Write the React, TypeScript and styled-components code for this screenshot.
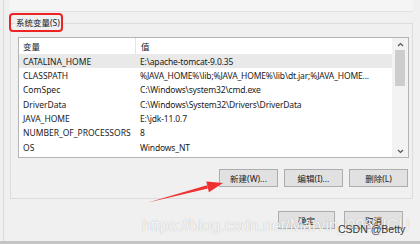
import React from 'react';
import styled, { createGlobalStyle } from 'styled-components';

const GlobalStyle = createGlobalStyle`
  html, body {
    margin: 0;
    padding: 0;
    background: #f0f0f0;
  }
  body {
    font-family: "Noto Sans", "Noto Sans CJK SC", sans-serif;
    color: #1a1a1a;
  }
`;

interface EnvVar {
  name: string;
  value: string;
}

const VARS: EnvVar[] = [
  { name: 'CATALINA_HOME', value: 'E:\\apache-tomcat-9.0.35' },
  { name: 'CLASSPATH', value: '%JAVA_HOME%\\lib;%JAVA_HOME%\\lib\\dt.jar;%JAVA_HOME...' },
  { name: 'ComSpec', value: 'C:\\Windows\\system32\\cmd.exe' },
  { name: 'DriverData', value: 'C:\\Windows\\System32\\Drivers\\DriverData' },
  { name: 'JAVA_HOME', value: 'E:\\jdk-11.0.7' },
  { name: 'NUMBER_OF_PROCESSORS', value: '8' },
  { name: 'OS', value: 'Windows_NT' },
];

const Chevron = ({ down }: { down?: boolean }) => (
  <svg width="7" height="5" viewBox="0 0 7 5">
    <polyline
      points={down ? '1,1 3.5,3.5 6,1' : '1,4 3.5,1.5 6,4'}
      fill="none"
      stroke="#555"
      strokeWidth="1.2"
    />
  </svg>
);

const Arrow = () => (
  <ArrowSvg width="420" height="244" viewBox="0 0 420 244">
    <polygon points="148,202.5 207.9,188.6 207.1,185.2" fill="#f03030" />
    <polygon points="223,183 206.3,181.6 208.9,192.2" fill="#f03030" />
  </ArrowSvg>
);

const App = () => {
  return (
    <Window>
      <GlobalStyle />
      <Body>
        <TopStrip />
        <GroupBox>
          <Legend>系统变量(S)</Legend>
          <ListBox>
            <Table>
              <HeaderRow>
                <NameCell>变量</NameCell>
                <HeaderDivider />
                <ValueCell>值</ValueCell>
              </HeaderRow>
              {VARS.map((v, i) => (
                <Row key={v.name} selected={i === 0}>
                  <NameCell>{v.name}</NameCell>
                  <ValueCell>{v.value}</ValueCell>
                </Row>
              ))}
            </Table>
            <ScrollBar>
              <ScrollArrow>
                <Chevron />
              </ScrollArrow>
              <Track>
                <Thumb />
              </Track>
              <ScrollArrow>
                <Chevron down />
              </ScrollArrow>
            </ScrollBar>
          </ListBox>
          <ButtonRow>
            <Button>新建(W)...</Button>
            <Button>编辑(I)...</Button>
            <Button>删除(L)</Button>
          </ButtonRow>
        </GroupBox>
        <DialogButtons>
          <Button narrow>确定</Button>
          <Button>取消</Button>
        </DialogButtons>
      </Body>
      <BottomBar />
      <Highlight />
      <Arrow />
      <Watermark>https://blog.csdn.net/Marvin_996_ICU</Watermark>
      <Credit>CSDN @Betty</Credit>
    </Window>
  );
};

export default App;

const Window = styled.div`
  position: relative;
  width: 420px;
  height: 244px;
  overflow: hidden;
  display: flex;
  flex-direction: column;
  background: #f0f0f0;
  font-size: 8.5px;
`;

const Body = styled.div`
  flex: 1;
  margin-left: 3px;
  padding-left: 6px;
  border-left: 1px solid #dadada;
  display: flex;
  flex-direction: column;
`;

const TopStrip = styled.div`
  height: 11px;
  margin-right: 7px;
  background: #f5f5f5;
  border-bottom: 1px solid #e0e0e0;
`;

const GroupBox = styled.fieldset`
  margin: 4px 7px 0 0;
  padding: 7px 3px 11px 7px;
  border: 1px solid #dcdcdc;
  min-width: 0;
  display: flex;
  flex-direction: column;
`;

const Legend = styled.legend`
  margin-left: -3px;
  padding: 0 1px;
  line-height: 14px;
  font-size: 8.5px;
  color: #1a1a1a;
`;

const ListBox = styled.div`
  height: 121px;
  box-sizing: border-box;
  border: 1px solid #b4b4b4;
  background: #fff;
  display: flex;
`;

const Table = styled.div`
  flex: 1;
  display: flex;
  flex-direction: column;
`;

const HeaderRow = styled.div`
  height: 16px;
  display: flex;
  align-items: center;
  background: #fff;
`;

const HeaderDivider = styled.div`
  width: 1px;
  align-self: stretch;
  background: #e5e5e5;
`;

const Row = styled.div<{ selected?: boolean }>`
  height: 14.33px;
  display: flex;
  align-items: center;
  background: ${(p) => (p.selected ? '#e9e9e9' : '#fff')};
`;

const NameCell = styled.div`
  width: 116px;
  padding-left: 4px;
  box-sizing: border-box;
  white-space: nowrap;
`;

const ValueCell = styled.div`
  flex: 1;
  padding-left: 5px;
  white-space: nowrap;
  overflow: hidden;
  letter-spacing: -0.15px;
`;

const ScrollBar = styled.div`
  width: 16px;
  display: flex;
  flex-direction: column;
  background: #f3f3f3;
`;

const ScrollArrow = styled.div`
  height: 12px;
  display: flex;
  align-items: center;
  justify-content: center;
`;

const Track = styled.div`
  flex: 1;
  padding: 0 3px;
`;

const Thumb = styled.div`
  height: 36px;
  background: #cdcdcd;
`;

const ButtonRow = styled.div`
  margin-top: 11px;
  padding-right: 1px;
  display: flex;
  justify-content: flex-end;
  gap: 6px;
`;

const Button = styled.div<{ narrow?: boolean }>`
  width: ${(p) => (p.narrow ? 57 : 59)}px;
  height: 18px;
  box-sizing: border-box;
  border: 1px solid #adadad;
  background: #e1e1e1;
  display: flex;
  align-items: center;
  justify-content: center;
  font-size: 8.5px;
  color: #1a1a1a;
`;

const DialogButtons = styled.div`
  margin-top: 12px;
  padding-right: 17px;
  display: flex;
  justify-content: flex-end;
  gap: 9px;
`;

const BottomBar = styled.div`
  height: 3px;
  background: #c4c4c4;
`;

const Highlight = styled.div`
  position: absolute;
  left: 9px;
  top: 13px;
  width: 54px;
  height: 19px;
  box-sizing: border-box;
  border: 2px solid #ee2424;
  border-radius: 4px;
`;

const ArrowSvg = styled.svg`
  position: absolute;
  left: 0;
  top: 0;
  pointer-events: none;
`;

const Watermark = styled.div`
  position: absolute;
  left: 142px;
  top: 218px;
  font-family: "Liberation Sans", Arial, sans-serif;
  font-size: 16px;
  line-height: 16px;
  color: rgba(255, 255, 255, 0.9);
  text-shadow: 0 0 1px rgba(0, 0, 0, 0.3);
  white-space: nowrap;
`;

const Credit = styled.div`
  position: absolute;
  left: 338px;
  top: 223px;
  font-family: "Liberation Sans", Arial, sans-serif;
  font-size: 10.5px;
  line-height: 12px;
  color: #3a3a3a;
  white-space: nowrap;
`;
